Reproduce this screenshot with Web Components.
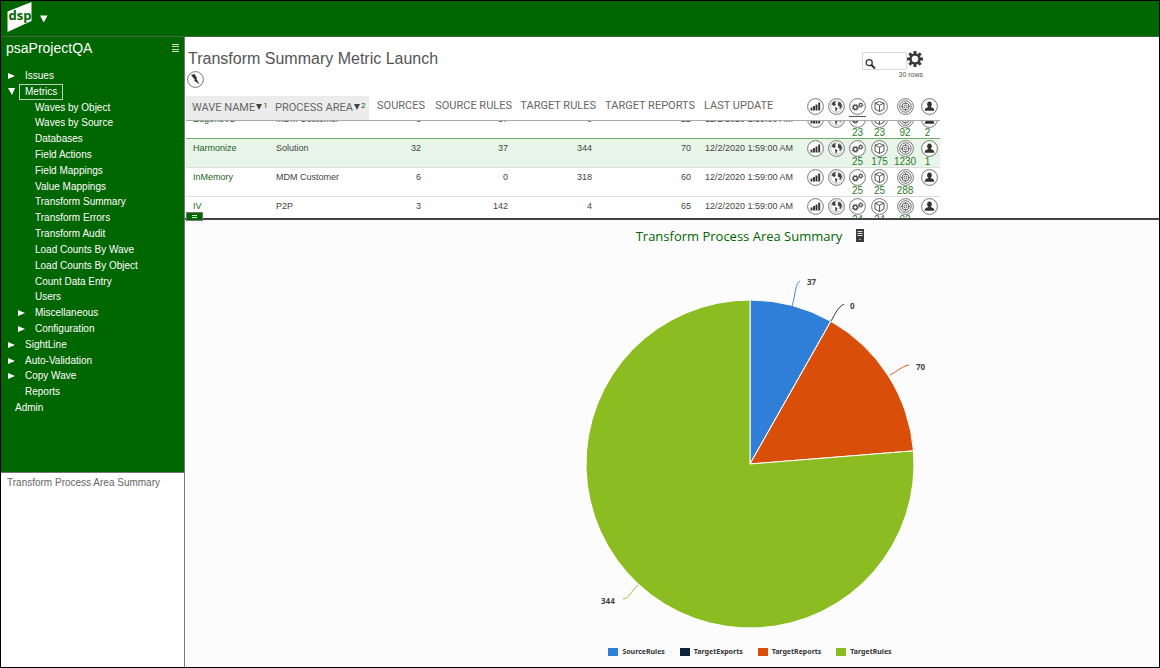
<!DOCTYPE html>
<html lang="en">
<head>
<meta charset="utf-8">
<title>Transform Summary Metric Launch</title>
<style>
  html, body { height: 100%; margin: 0; }
  body { font-family: "Liberation Sans", Arial, sans-serif; font-size: 10px; color: #555; }
</style>
</head>
<body>
<dsp-app>
  <dsp-topbar slot="top"></dsp-topbar>
  <dsp-sidebar slot="side" heading="psaProjectQA">
    <tree-item level="1" state="closed">Issues</tree-item>
    <tree-item level="1" state="open" current>Metrics</tree-item>
    <tree-item level="2">Waves by Object</tree-item>
    <tree-item level="2">Waves by Source</tree-item>
    <tree-item level="2">Databases</tree-item>
    <tree-item level="2">Field Actions</tree-item>
    <tree-item level="2">Field Mappings</tree-item>
    <tree-item level="2">Value Mappings</tree-item>
    <tree-item level="2">Transform Summary</tree-item>
    <tree-item level="2">Transform Errors</tree-item>
    <tree-item level="2">Transform Audit</tree-item>
    <tree-item level="2">Load Counts By Wave</tree-item>
    <tree-item level="2">Load Counts By Object</tree-item>
    <tree-item level="2">Count Data Entry</tree-item>
    <tree-item level="2">Users</tree-item>
    <tree-item level="2" state="closed">Miscellaneous</tree-item>
    <tree-item level="2" state="closed">Configuration</tree-item>
    <tree-item level="1" state="closed">SightLine</tree-item>
    <tree-item level="1" state="closed">Auto-Validation</tree-item>
    <tree-item level="1" state="closed">Copy Wave</tree-item>
    <tree-item level="1">Reports</tree-item>
    <tree-item level="0">Admin</tree-item>
    <span slot="note">Transform Process Area Summary</span>
  </dsp-sidebar>
  <page-header>Transform Summary Metric Launch</page-header>
  <metric-grid></metric-grid>
  <pane-splitter></pane-splitter>
  <pie-panel>Transform Process Area Summary</pie-panel>
</dsp-app>

<script>
// Shared helper: opens the shadow root and fills it
function render(el, html) {
  const root = el.attachShadow({ mode: 'open' });
  const tpl = document.createElement('template');
  tpl.innerHTML = html;
  root.appendChild(tpl.content.cloneNode(true));
  return root;
}

class DspApp extends HTMLElement {
  constructor() {
    super();
    render(this, `
      <style>
        :host {
          display: grid;
          grid-template: 36px minmax(0, 1fr) / 184px minmax(0, 1fr);
          box-sizing: border-box;
          height: 100vh;
          border: 1px solid #000;
          background: #fff;
        }
        header { grid-column: 1 / -1; }
        aside { min-height: 0; }
        main { display: flex; flex-direction: column; min-height: 0; }
      </style>
      <header><slot name="top"></slot></header>
      <aside><slot name="side"></slot></aside>
      <main><slot></slot></main>
    `);
  }
}
customElements.define('dsp-app', DspApp);

class DspTopbar extends HTMLElement {
  constructor() {
    super();
    render(this, `
      <style>
        :host {
          display: flex;
          align-items: center;
          box-sizing: border-box;
          height: 36px;
          padding-left: 6px;
          gap: 6px;
          background: #006600;
          border-bottom: 1px solid #3d6b3d;
        }
        a { display: block; height: 32px; margin-bottom: 4px; }
        svg { display: block; }
        button { padding: 0; border: 0; background: none; }
      </style>
      <a href="#" aria-label="Home">
        <svg width="27" height="32" viewBox="0 0 27 32">
          <path d="M0.500 10.500L24.500 1V20L0.500 31Z" fill="#fff"/>
          <text x="1.500" y="19" font-family="Open Sans, sans-serif" font-size="13" font-weight="700" fill="#006600">dsp</text>
        </svg>
      </a>
      <button aria-label="Open menu"><svg width="8" height="8" viewBox="0 0 8 8"><path d="M0 0.500H7.500L3.750 7.500Z" fill="#fff"/></svg></button>
    `);
  }
}
customElements.define('dsp-topbar', DspTopbar);

class DspSidebar extends HTMLElement {
  constructor() {
    super();
    const root = render(this, `
      <style>
        :host {
          display: grid;
          grid-template-rows: minmax(0, 69fr) minmax(0, 31fr);
          box-sizing: border-box;
          height: 100%;
          border-right: 1px solid #777;
        }
        .panel { background: #006600; color: #fff; overflow: hidden; }
        .top { display: flex; justify-content: space-between; align-items: center; height: 22px; padding: 0 4px 0 5px; }
        h2 { margin: 0; font-size: 14px; font-weight: normal; }
        button { padding: 0; border: 0; background: none; display: flex; }
        nav { display: grid; grid-auto-rows: 1fr; height: 348px; margin-top: 9px; }
        .note { padding: 4px 6px; line-height: 11px; border-top: 1px solid #777; background: #fff; color: #666; }
      </style>
      <div class="panel">
        <div class="top">
          <h2></h2>
          <button aria-label="Collapse menu"><svg width="9" height="8" viewBox="0 0 9 8" stroke="#cfe3cf" stroke-width="1"><path d="M1 .5H8M1 2.500H8M1 5.500H8M1 7.500H8"/></svg></button>
        </div>
        <nav><slot></slot></nav>
      </div>
      <div class="note"><slot name="note"></slot></div>
    `);
    root.querySelector('h2').textContent = this.getAttribute('heading');
  }
}
customElements.define('dsp-sidebar', DspSidebar);

class TreeItem extends HTMLElement {
  constructor() {
    super();
    const state = this.getAttribute('state');
    const arrow = state === 'closed' ? '<path d="M0 1V7L7 4Z"/>' : state === 'open' ? '<path d="M0 0H7L4 7Z"/>' : '';
    render(this, `
      <style>
        :host { display: flex; align-items: center; min-height: 0; padding-left: 7px; }
        :host([level="2"]) { padding-left: 17px; }
        :host([level="0"]) { padding-left: 8px; }
        svg { width: 8px; height: 8px; fill: #fff; flex: none; margin-right: 3px; }
        :host([level="0"]) svg { display: none; }
        a { color: #fff; text-decoration: none; padding: 0 5px; border: 1px solid transparent; line-height: 14px; white-space: nowrap; }
        :host([current]) a { border-color: #b5d3b5; }
      </style>
      <svg viewBox="0 0 8 8">${arrow}</svg><a href="#"><slot></slot></a>
    `);
  }
}
customElements.define('tree-item', TreeItem);

// Round glyphs drawn in a 17px circle
const GLYPHS = {
  bars: '<path d="M4.500 12.500V9.500M7 12.500V8M9.500 12.500V6.500M12.200 12.500V4.500" stroke="#333" stroke-width="1.900" fill="none"/>',
  globe: '<circle cx="8.500" cy="8.500" r="5.800" fill="none" stroke="#999" stroke-width=".6"/><path d="M3.500 6L5.500 3.500L8 3.500L7 5.500L8 6.500L6.500 8L5 7.500ZM7 9L9.500 10L8.500 13.500L7.500 13ZM10 4L12.500 4.500L14 7.500L13 10.500L11.500 11L11.500 8.500L9.800 7.500Z" fill="#444"/>',
  gears: '<circle cx="6.300" cy="9.300" r="2" fill="none" stroke="#444" stroke-width="1.300"/><circle cx="6.300" cy="9.300" r="3" fill="none" stroke="#444" stroke-dasharray="1.200 1.160"/><circle cx="11.700" cy="7" r="1.500" fill="none" stroke="#444" stroke-width="1.100"/><circle cx="11.700" cy="7" r="2.300" fill="none" stroke="#444" stroke-width=".8" stroke-dasharray="1 .8"/>',
  box: '<path d="M8.500 3.500L13 5.200V11.200L8.500 13.500L4 11.200V5.200ZM4 5.200L8.500 7.200L13 5.200M8.500 7.200V13.500" stroke="#444" stroke-width=".9" fill="none"/>',
  target: '<g fill="none" stroke="#555" stroke-width=".9"><circle cx="8.500" cy="8.500" r="5.700"/><circle cx="8.500" cy="8.500" r="3.500"/><circle cx="8.500" cy="8.500" r="1.500"/></g><path d="M8.500 4V6M8.500 11V13M4 8.500H6M11 8.500H13" stroke="#555" stroke-width=".8"/>',
  user: '<ellipse cx="8.500" cy="6.200" rx="2.300" ry="2.800" fill="#333"/><path d="M3.700 12.700C3.700 10 5.500 9.500 7.500 9H9.500C11.500 9.500 13.300 10 13.300 12.700Z" fill="#333"/>',
  bolt: '<path d="M4 4L7.500 3L10 7L9.300 7.500L12.500 13.500L7 9.500L8 9Z" fill="#333"/>'
};

class RoundIcon extends HTMLElement {
  constructor() {
    super();
    render(this, `
      <style>
        :host { display: inline-block; width: 17px; height: 17px; }
        svg { display: block; }
      </style>
      <svg width="17" height="17" viewBox="0 0 17 17">
        <circle cx="8.500" cy="8.500" r="7.900" fill="#fff" stroke="#666" stroke-width=".9"/>
        ${GLYPHS[this.getAttribute('name')]}
      </svg>
    `);
  }
}
customElements.define('round-icon', RoundIcon);

class PageHeader extends HTMLElement {
  constructor() {
    super();
    render(this, `
      <style>
        :host { display: flex; justify-content: space-between; width: 736px; max-width: 100%; height: 59px; padding-left: 2px; flex: none; }
        h1 { margin: 12px 0 2px 1px; font-size: 16px; line-height: 20px; font-weight: normal; color: #555; }
        button { display: block; padding: 0; border: 0; background: none; }
        .tools { padding-top: 14px; text-align: right; }
        .line { display: flex; align-items: center; }
        label { position: relative; display: block; }
        input { display: block; box-sizing: border-box; width: 45px; height: 18px; padding: 0 2px 0 14px; border: 1px solid #d8d8d8; border-radius: 1px; font-size: 10px; background: #fff; }
        label svg { position: absolute; left: 3px; bottom: 0; }
        p { margin: 0; font-size: 7px; line-height: 9px; }
      </style>
      <div>
        <h1><slot></slot></h1>
        <button aria-label="Quick actions"><round-icon name="bolt"></round-icon></button>
      </div>
      <div class="tools">
        <div class="line">
          <label>
            <input type="text" aria-label="Search">
            <svg width="12" height="12" viewBox="0 0 12 12" fill="none" stroke="#333"><circle cx="4.200" cy="4.700" r="3" stroke-width="1.300"/><path d="M6.500 7L10 10.500" stroke-width="2"/></svg>
          </label>
          <button aria-label="Settings">
            <svg width="16" height="16" viewBox="0 0 16 16"><circle cx="8" cy="8" r="4.500" fill="none" stroke="#3a3a3a" stroke-width="2.600"/><g stroke="#3a3a3a" stroke-width="3"><path d="M8 0V3M8 13V16M0 8H3M13 8H16M2.300 2.300L4.500 4.500M11.500 11.500L13.700 13.700M2.300 13.700L4.500 11.500M11.500 4.500L13.700 2.300"/></g></svg>
          </button>
        </div>
        <p>30 rows</p>
      </div>
    `);
  }
}
customElements.define('page-header', PageHeader);

const ROWS = [
  { wave: 'EugeneV2', area: 'MDM Customer', nums: ['6', '37', '0', '22'], counts: ['23', '23', '92', '2'] },
  { wave: 'Harmonize', area: 'Solution', nums: ['32', '37', '344', '70'], counts: ['25', '175', '1230', '1'], selected: true },
  { wave: 'InMemory', area: 'MDM Customer', nums: ['6', '0', '318', '60'], counts: ['25', '25', '288', ''] },
  { wave: 'IV', area: 'P2P', nums: ['3', '142', '4', '65'], counts: ['24', '24', '92', ''] }
];
const ICON_COLUMNS = ['bars', 'globe', 'gears', 'box', 'target', 'user'];

class MetricGrid extends HTMLElement {
  constructor() {
    super();
    const widths = [83, 100, 60, 87, 84, 99, 106, 21, 21, 21, 23, 28, 21];
    const cols = widths.map(w => `<col style="width:${w}px">`).join('');
    const iconHeads = ICON_COLUMNS.map(n =>
      `<th class="icon ${n}"><button aria-label="${n}"><round-icon name="${n}"></round-icon></button></th>`).join('');
    const body = ROWS.map(r => `
      <tr class="${r.selected ? 'selected' : ''}">
        <td><a href="#">${r.wave}</a></td>
        <td>${r.area}</td>
        ${r.nums.map(n => `<td class="num">${n}</td>`).join('')}
        <td class="date">12/2/2020 1:59:00 AM</td>
        ${ICON_COLUMNS.map((n, i) => `<td class="icon ${n}"><round-icon name="${n}"></round-icon>${i > 1 ? `<a href="#">${r.counts[i - 2]}</a>` : ''}</td>`).join('')}
      </tr>`).join('');
    render(this, `
      <style>
        :host { display: block; height: 122px; overflow: hidden; flex: none; padding-left: 1px; }
        .scroller { height: 122px; overflow: hidden; }
        table { table-layout: fixed; width: 754px; border-spacing: 0; }
        th {
          position: sticky; top: 0; z-index: 1;
          box-sizing: border-box; height: 25px; padding: 0 0 5px 8px;
          border-bottom: 1px solid #aaa; background: #fff;
          font: 11px/16px Roboto, "Liberation Sans", sans-serif;
          color: #666; text-align: left; white-space: nowrap;
        }
        th.sorted { background: #ececec; padding: 0 0 1px 6px; }
        th.num { text-align: right; padding: 0 4px 5px 0; }
        th.date { padding: 0 0 5px 5px; }
        sup { font-size: 8px; line-height: 8px; color: #006600; vertical-align: 3px; margin-left: 1px; }
        .mark { display: inline-block; border: 3px solid transparent; border-top: 6px solid #444; border-bottom: 0; margin-left: 1px; vertical-align: 1px; }
        th.icon, td.icon { padding: 0; text-align: center; vertical-align: top; }
        th button { display: block; margin: 2px auto 0; padding: 0; border: 0; background: none; height: 18px; }
        th.gears button { height: 19px; border-bottom: 1px solid #555; }
        td {
          box-sizing: border-box; height: 29px; padding: 4px 0 0 7px;
          border-bottom: 1px solid #ddd; vertical-align: top;
          font-size: 9px; line-height: 11px; color: #444; white-space: nowrap;
        }
        td.num { text-align: right; padding: 4px 8px 0 0; }
        td.date { padding-left: 6px; }
        td.icon { padding-top: 1px; }
        td.icon round-icon { display: block; margin: 0 auto; }
        td.icon a { display: flex; justify-content: center; height: 10px; font-size: 10px; line-height: 10px; color: #2a7a2a; }
        td.user a { padding-right: 4px; }
        a { color: #1f5f1f; text-decoration: none; }
        .selected td { background: #e8f5e9; }
        tr:has(+ .selected) td { border-bottom-color: #6fae6f; }
      </style>
      <div class="scroller">
        <table>
          <colgroup>${cols}</colgroup>
          <thead><tr>
            <th class="sorted">WAVE NAME<span class="mark"></span><sup>1</sup></th>
            <th class="sorted">PROCESS AREA<span class="mark"></span><sup>2</sup></th>
            <th class="num">SOURCES</th>
            <th class="num">SOURCE RULES</th>
            <th class="num">TARGET RULES</th>
            <th class="num">TARGET REPORTS</th>
            <th class="date">LAST UPDATE</th>
            ${iconHeads}
          </tr></thead>
          <tbody>${body}</tbody>
        </table>
      </div>
    `);
  }

  connectedCallback() {
    this.shadowRoot.querySelector('.scroller').scrollTop = 11;
  }
}
customElements.define('metric-grid', MetricGrid);

class PaneSplitter extends HTMLElement {
  constructor() {
    super();
    render(this, `
      <style>
        :host { display: block; position: relative; z-index: 2; height: 2px; background: #444; flex: none; }
        button { position: absolute; left: 1px; top: -6px; display: flex; align-items: center; justify-content: center; width: 17px; height: 9px; padding: 0; border: 1px solid #777; background: #006600; }
      </style>
      <button aria-label="Toggle pane"><svg width="5" height="3" viewBox="0 0 5 3" stroke="#cde6cd"><path d="M0 .5H5M0 2.500H5"/></svg></button>
    `);
  }
}
customElements.define('pane-splitter', PaneSplitter);

const SLICES = [
  { name: 'SourceRules', value: 37, color: '#2f7ed8', label: [257, 16], line: 'M242 37C246 24 245 15 250 12' },
  { name: 'TargetExports', value: 0, color: '#0d233a', label: [300, 40], line: 'M281 52C286 44 287 39 294 35' },
  { name: 'TargetReports', value: 70, color: '#d94f0a', label: [366, 101], line: 'M340 106C350 101 350 98 359 96' },
  { name: 'TargetRules', value: 344, color: '#8bbc21', label: [51, 335], line: 'M88 316C80 323 80 329 73 330' }
];

class PiePanel extends HTMLElement {
  constructor() {
    super();
    const cx = 200, cy = 195, r = 164;
    const total = SLICES.reduce((sum, s) => sum + s.value, 0);
    const at = v => {
      const a = v / total * Math.PI * 2;
      return `${cx + r * Math.sin(a)} ${cy - r * Math.cos(a)}`;
    };
    let sum = 0;
    const paths = SLICES.map(s => {
      const from = at(sum);
      sum += s.value;
      const big = s.value > total / 2 ? 1 : 0;
      return `<path d="M${cx} ${cy}L${from}A${r} ${r} 0 ${big} 1 ${at(sum)}Z" fill="${s.color}" stroke="#fff"/>`;
    }).join('');
    const labels = SLICES.map(s => `
      <path d="${s.line}" fill="none" stroke="${s.color}" stroke-width=".9"/>
      <text x="${s.label[0]}" y="${s.label[1]}">${s.value}</text>`).join('');
    const legend = SLICES.map(s => `<li><i style="background:${s.color}"></i>${s.name}</li>`).join('');
    render(this, `
      <style>
        :host {
          display: flex; flex-direction: column; align-items: center;
          flex: 1; min-height: 0; overflow: hidden;
          padding-left: 156px; background: #fcfcfc;
          font-family: "Noto Sans", "Open Sans", sans-serif;
        }
        .title { display: flex; align-items: center; gap: 14px; height: 31px; margin-bottom: 18px; }
        h2 { margin: 0; font: 13px/20px "Open Sans", "Noto Sans", sans-serif; color: #006600; }
        .title button { padding: 0; border: 0; background: none; display: flex; }
        .pie { display: block; flex: none; }
        text { font-size: 8px; font-weight: bold; fill: #444; }
        ul { display: flex; gap: 15px; margin: 7px 0 0; padding: 0; list-style: none; font-size: 7px; line-height: 12px; font-weight: bold; color: #333; }
        li { display: flex; align-items: center; gap: 4px; }
        i { width: 10px; height: 8px; }
      </style>
      <div class="title">
        <h2><slot></slot></h2>
        <button aria-label="Export"><svg width="8" height="13" viewBox="0 0 8 13"><path d="M0 0H8V13H0Z" fill="#3a3a3a"/><path d="M1.500 2.500H6.500M1.500 4.500H6.500M1.500 6.500H6.500" stroke="#ddd"/><circle cx="4" cy="10.500" r=".7" fill="#ddd"/></svg></button>
      </div>
      <svg class="pie" width="400" height="370" viewBox="0 0 400 370">${paths}${labels}</svg>
      <ul>${legend}</ul>
    `);
  }
}
customElements.define('pie-panel', PiePanel);
</script>
</body>
</html>
